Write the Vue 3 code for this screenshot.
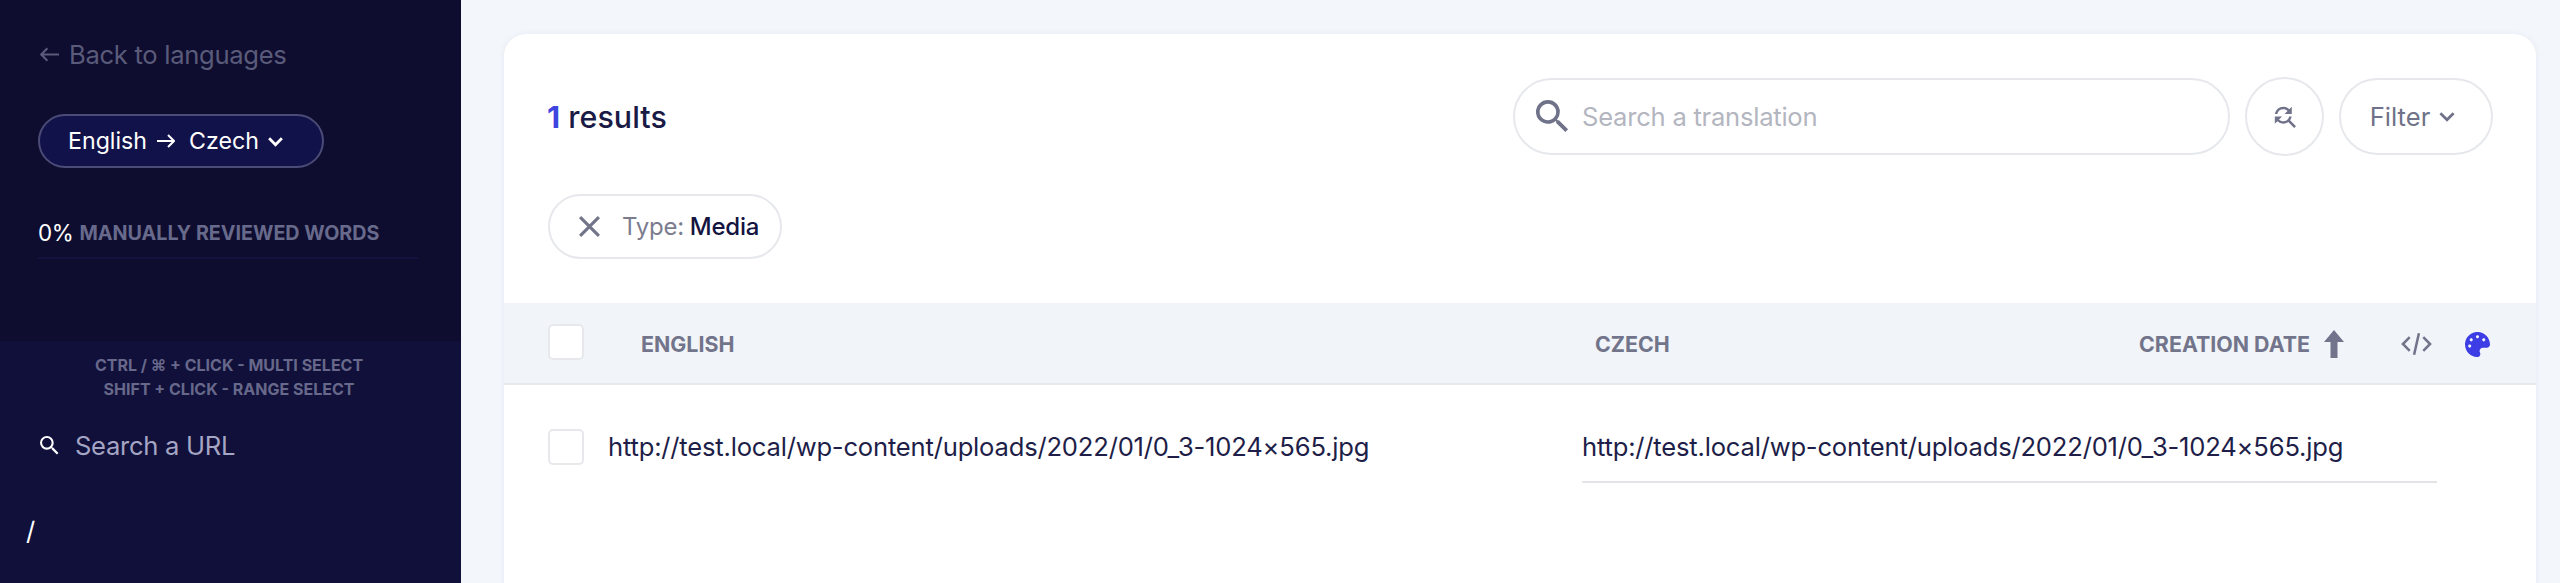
<template>
  <div class="page">
    <aside class="sidebar">
      <div class="side-top">
        <a class="back">
          <svg class="back-arrow" viewBox="0 0 18 14"><path d="M7 1 1.200 7 7 13M1.500 7H18" /></svg>
          Back to languages
        </a>
        <button class="lang-pill">
          <span>English</span>
          <svg class="lang-arrow" viewBox="0 0 18 14"><path d="M11 1l6 6-6 6M17 7H0" /></svg>
          <span>Czech</span>
          <svg class="lang-chev" viewBox="0 0 16 10"><path d="M2 2l6 6 6-6" /></svg>
        </button>
        <div class="progress">
          <span class="percent">0%</span>
          <span class="progress-label">MANUALLY REVIEWED WORDS</span>
        </div>
        <div class="progress-bar"></div>
      </div>
      <div class="side-bottom">
        <div class="hints">
          <div>CTRL / ⌘ + CLICK - MULTI SELECT</div>
          <div>SHIFT + CLICK - RANGE SELECT</div>
        </div>
        <div class="url-search">
          <svg class="url-icon" viewBox="3 3 18 18"><path :d="searchPath" /></svg>
          <input placeholder="Search a URL" />
        </div>
        <div class="root-path">/</div>
      </div>
    </aside>

    <main class="main">
      <section class="card">
        <div class="toolbar">
          <div class="results"><b>1</b> results</div>
          <div class="controls">
            <label class="search">
              <svg class="search-icon" viewBox="3 3 18 18"><path :d="searchPath" /></svg>
              <input placeholder="Search a translation" />
            </label>
            <button class="round">
              <svg viewBox="0 0 24 24"><path d="M11 6c1.38 0 2.63.56 3.54 1.46L12 10h6V4l-2.05 2.05A6.976 6.976 0 0 0 11 4c-3.53 0-6.43 2.61-6.92 6H6.100A5 5 0 0 1 11 6zm5.64 9.14A6.89 6.89 0 0 0 17.92 12H15.900a5 5 0 0 1-4.900 4c-1.38 0-2.63-.56-3.54-1.46L10 12H4v6l2.05-2.05A6.976 6.976 0 0 0 11 18c1.55 0 2.98-.51 4.14-1.36L20 21.49 21.49 20l-4.85-4.86z" /></svg>
            </button>
            <button class="filter">
              Filter
              <svg viewBox="0 0 16 10"><path d="M2 2l6 6 6-6" /></svg>
            </button>
          </div>
        </div>

        <div class="chips">
          <div class="chip">
            <svg viewBox="0 0 24 24"><path d="M3 3l18 18M21 3 3 21" /></svg>
            <span class="chip-key">Type:</span>
            <span class="chip-value">Media</span>
          </div>
        </div>

        <div class="thead">
          <span class="check"></span>
          <span class="col-en">ENGLISH</span>
          <span class="col-cs">CZECH</span>
          <span class="col-date">CREATION DATE</span>
          <svg class="sort" viewBox="0 0 20 28"><path d="M10 0 20 12h-6.500v16h-7V12H0z" /></svg>
          <svg class="code" viewBox="0 0 32 24"><path d="M9 5 2 12l7 7M23 5l7 7-7 7M18.500 1l-5 22" /></svg>
          <svg class="palette" viewBox="0 0 512 512"><path d="M204.300 5C104.900 24.400 24.800 104.300 5.200 203.400c-37 187 131.700 326.400 258.800 306.700 41.200-6.400 61.400-54.600 42.500-91.700-23.100-45.400 9.900-98.400 60.900-98.400h79.700c35.800 0 64.800-29.600 64.900-65.300C511.500 97.100 368.100-26.900 204.300 5zM96 320c-17.700 0-32-14.300-32-32s14.300-32 32-32 32 14.300 32 32-14.300 32-32 32zm32-128c-17.700 0-32-14.300-32-32s14.300-32 32-32 32 14.300 32 32-14.300 32-32 32zm128-64c-17.700 0-32-14.300-32-32s14.300-32 32-32 32 14.300 32 32-14.300 32-32 32zm128 64c-17.700 0-32-14.300-32-32s14.300-32 32-32 32 14.300 32 32-14.300 32-32 32z" /></svg>
        </div>

        <div v-for="row in rows" :key="row.source" class="row">
          <span class="check row-check"></span>
          <div class="cell-en">{{ row.source }}</div>
          <div class="cell-cs">{{ row.target }}</div>
        </div>
      </section>
    </main>
  </div>
</template>

<script setup>
const searchPath = "M15.5 14h-.79l-.28-.27A6.471 6.471 0 0 0 16 9.5 6.5 6.5 0 1 0 9.5 16c1.61 0 3.09-.59 4.23-1.57l.27.28v.79l5 4.99L20.49 19l-4.99-5zm-6 0C7.01 14 5 11.99 5 9.5S7.01 5 9.5 5 14 7.01 14 9.5 11.99 14 9.5 14z"

const rows = [
  {
    source: "http://test.local/wp-content/uploads/2022/01/0_3-1024×565.jpg",
    target: "http://test.local/wp-content/uploads/2022/01/0_3-1024×565.jpg"
  }
]
</script>

<style>
html, body {
  margin: 0;
  height: 583px;
  overflow: hidden;
  background: #f3f6fb;
}
</style>

<style scoped>
.page {
  display: flex;
  height: 583px;
  overflow: hidden;
  font-family: Inter, "Liberation Sans", sans-serif;
  background: #f3f6fb;
}
button, input {
  font-family: inherit;
}

/* sidebar */
.sidebar {
  width: 461px;
  flex: none;
  display: flex;
  flex-direction: column;
  background: #10103a;
}
.side-top {
  height: 341px;
  box-sizing: border-box;
  padding: 38px 0 0 38px;
  background: #0e0d2f;
}
.back {
  display: flex;
  align-items: center;
  height: 32px;
  color: #5a5b7a;
  font-size: 25.6px;
  letter-spacing: -0.3px;
  white-space: nowrap;
}
.back-arrow {
  width: 19px;
  height: 15px;
  margin: 0 10px 0 2px;
  fill: none;
  stroke: #5a5b7a;
  stroke-width: 2;
}
.lang-pill {
  display: flex;
  align-items: center;
  box-sizing: border-box;
  width: 286px;
  height: 54px;
  margin-top: 44px;
  padding: 0 0 0 28px;
  border: 2px solid #4b4b78;
  border-radius: 27px;
  background: #12124a;
  color: #fff;
  font-size: 23.2px;
  white-space: nowrap;
}
.lang-arrow {
  width: 18px;
  height: 14px;
  margin: 0 14px 0 10px;
  fill: none;
  stroke: #fff;
  stroke-width: 2;
}
.lang-chev {
  width: 17px;
  height: 11px;
  margin-left: 8px;
  fill: none;
  stroke: #fff;
  stroke-width: 2.6;
}
.progress {
  display: flex;
  align-items: center;
  height: 27px;
  margin-top: 51px;
  white-space: nowrap;
}
.percent {
  color: #fff;
  font-size: 22.4px;
  letter-spacing: -0.3px;
}
.progress-label {
  margin-left: 6px;
  color: #686a8c;
  font-size: 19.7px;
  font-weight: 700;
}
.progress-bar {
  width: 380px;
  height: 2px;
  margin-top: 11px;
  background: #141340;
}
.side-bottom {
  flex: 1;
  display: flex;
  flex-direction: column;
}
.hints {
  margin-top: 13px;
  padding-right: 3px;
  color: #67688a;
  font-size: 16px;
  font-weight: 700;
  line-height: 23.5px;
  text-align: center;
  white-space: nowrap;
}
.url-search {
  display: flex;
  align-items: center;
  height: 32px;
  margin: 28px 0 0 40px;
}
.url-icon {
  width: 19px;
  height: 19px;
  margin-right: 16px;
  fill: #fff;
}
.url-search input {
  width: 300px;
  padding: 0;
  border: 0;
  outline: 0;
  background: transparent;
  font-size: 25.6px;
  letter-spacing: -0.3px;
}
.url-search input::placeholder {
  color: #a5a5c4;
  opacity: 1;
}
.root-path {
  margin: 54px 0 0 26px;
  color: #fff;
  font-size: 25.6px;
  line-height: 32px;
}

/* main card */
.main {
  flex: 1;
  min-width: 0;
  padding: 34px 24px 0 43px;
}
.card {
  height: 700px;
  border-radius: 22px;
  background: #fff;
  box-shadow: 0 0 6px rgba(30, 40, 90, 0.06);
}
.toolbar {
  display: flex;
  align-items: center;
  justify-content: space-between;
  padding: 43px 43px 0 43px;
}
.results {
  color: #1a1a46;
  font-size: 30.4px;
  font-weight: 500;
  letter-spacing: 0.05px;
}
.results b {
  color: #3f46e0;
  font-weight: 700;
}
.controls {
  display: flex;
  align-items: center;
}
.search {
  display: flex;
  align-items: center;
  box-sizing: border-box;
  width: 717px;
  height: 77px;
  padding: 0 30px 0 21px;
  border: 2px solid #e6e8ec;
  border-radius: 39px;
}
.search-icon {
  width: 33px;
  height: 33px;
  flex: none;
  margin-right: 13px;
  fill: #6f7288;
}
.search input {
  flex: 1;
  min-width: 0;
  padding: 0;
  border: 0;
  outline: 0;
  background: transparent;
  font-size: 25.6px;
  letter-spacing: -0.25px;
}
.search input::placeholder {
  color: #b3b5bf;
  opacity: 1;
}
.round {
  display: flex;
  align-items: center;
  justify-content: center;
  box-sizing: border-box;
  width: 79px;
  height: 79px;
  margin-left: 15px;
  padding: 0;
  border: 2px solid #e6e8ec;
  border-radius: 50%;
  background: #fff;
}
.round svg {
  width: 29px;
  height: 29px;
  fill: #6f7288;
}
.filter {
  display: flex;
  align-items: center;
  justify-content: center;
  box-sizing: border-box;
  width: 154px;
  height: 77px;
  margin-left: 15px;
  padding: 0 6px 0 0;
  border: 2px solid #e6e8ec;
  border-radius: 39px;
  background: #fff;
  color: #6f7288;
  font-size: 25.6px;
}
.filter svg {
  width: 18px;
  height: 11px;
  margin-left: 8px;
  fill: none;
  stroke: #6f7288;
  stroke-width: 2.4;
}
.chips {
  padding: 38px 0 0 44px;
}
.chip {
  display: inline-flex;
  align-items: center;
  box-sizing: border-box;
  height: 65px;
  width: 234px;
  padding-left: 27px;
  border: 2px solid #e6e8ec;
  border-radius: 33px;
  font-size: 24px;
  letter-spacing: -0.25px;
  vertical-align: top;
}
.chip svg {
  width: 25px;
  height: 25px;
  margin-right: 20px;
  fill: none;
  stroke: #72758a;
  stroke-width: 3;
}
.chip-key {
  color: #7b7d8f;
}
.chip-value {
  margin-left: 6px;
  color: #141440;
  font-weight: 500;
}

/* table */
.thead {
  display: flex;
  align-items: center;
  box-sizing: border-box;
  height: 82px;
  margin-top: 44px;
  padding: 2px 46px 0 44px;
  border-bottom: 2px solid #e6e8ec;
  background: #f1f4f8;
  color: #71748a;
  font-size: 21.4px;
  font-weight: 700;
  white-space: nowrap;
}
.check {
  display: block;
  box-sizing: border-box;
  width: 36px;
  height: 36px;
  flex: none;
  border: 2px solid #e6e8ec;
  border-radius: 5px;
  background: #fff;
}
.thead .check {
  margin-top: -4px;
}
.col-en {
  width: 954px;
  flex: none;
  margin-left: 57px;
}
.col-cs {
  flex: 1;
}
.sort {
  width: 20px;
  height: 28px;
  margin-left: 14px;
  fill: #71748a;
}
.code {
  width: 31px;
  height: 24px;
  margin-left: 57px;
  fill: none;
  stroke: #71748a;
  stroke-width: 2.6;
}
.palette {
  width: 25px;
  height: 25px;
  margin-left: 33px;
  fill: #3d3de6;
}
.row {
  display: flex;
  align-items: flex-start;
  padding: 42px 0 0 44px;
  color: #1e1e48;
  font-size: 25.6px;
  letter-spacing: -0.2px;
  line-height: 39px;
  white-space: nowrap;
}
.row-check {
  margin-top: 2px;
}
.cell-en {
  width: 974px;
  flex: none;
  margin-left: 24px;
}
.cell-cs {
  width: 855px;
  flex: none;
  padding-bottom: 15px;
  border-bottom: 2px solid #e2e4e8;
}
</style>
